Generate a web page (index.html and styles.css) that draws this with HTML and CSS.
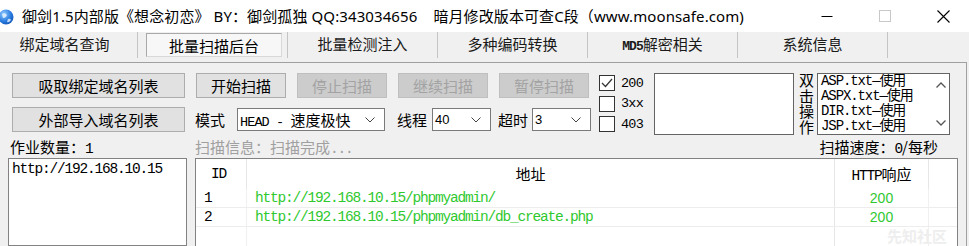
FILE: index.html
```html
<!DOCTYPE html>
<html lang="zh">
<head>
<meta charset="utf-8">
<title>御剑</title>
<link rel="stylesheet" href="styles.css">
</head>
<body>
<div class="window">
  <div class="titlebar">
    <svg class="appicon" width="16" height="16" viewBox="0 0 16 16">
      <defs>
        <radialGradient id="g" cx="0.35" cy="0.3" r="0.8">
          <stop offset="0" stop-color="#8fc7ff"/>
          <stop offset="0.6" stop-color="#2a7de1"/>
          <stop offset="1" stop-color="#0d4fae"/>
        </radialGradient>
      </defs>
      <circle cx="8" cy="8" r="7.5" fill="url(#g)"/>
      <path d="M4 5 Q7 3 9 6 Q8 9 5 9 Z" fill="#e8f4ff" opacity="0.85"/>
      <path d="M10 10 Q12 9 13 11 Q11 14 9 13 Z" fill="#e8f4ff" opacity="0.8"/>
    </svg>
    <div class="title">御剑1.5内部版《想念初恋》 BY：御剑孤独 QQ:343034656&nbsp;&nbsp;&nbsp;&nbsp;暗月修改版本可查C段（www.moonsafe.com)</div>
    <div class="controls">
      <span class="ctl"><svg width="12" height="12" viewBox="0 0 12 12"><line x1="0.5" y1="6.5" x2="11.5" y2="6.5" stroke="#000" stroke-width="1"/></svg></span>
      <span class="ctl"><svg width="12" height="12" viewBox="0 0 12 12"><rect x="0.5" y="0.5" width="11" height="11" fill="none" stroke="#c8c8c8" stroke-width="1"/></svg></span>
      <span class="ctl"><svg width="13" height="13" viewBox="0 0 13 13"><path d="M0.5 0.5 L12.5 12.5 M12.5 0.5 L0.5 12.5" stroke="#000" stroke-width="1.1"/></svg></span>
    </div>
  </div>

  <div class="tabs">
    <div class="tab first">绑定域名查询</div>
    <div class="tab active"><span class="tab-face">批量扫描后台</span></div>
    <div class="tab">批量检测注入</div>
    <div class="tab">多种编码转换</div>
    <div class="tab"><span class="mono-t">MD5</span>解密相关</div>
    <div class="tab">系统信息</div>
  </div>

  <div class="panel">
    <div class="top">
      <div class="col-left">
        <button class="btn wide">吸取绑定域名列表</button>
        <button class="btn wide">外部导入域名列表</button>
      </div>
      <div class="col-mid">
        <div class="btnrow">
          <button class="btn">开始扫描</button>
          <button class="btn disabled">停止扫描</button>
          <button class="btn disabled">继续扫描</button>
          <button class="btn disabled">暂停扫描</button>
        </div>
        <div class="optrow">
          <span class="lbl lbl-mode">模式</span>
          <div class="select sel-mode"><span class="mono">HEAD - </span>速度极快
            <svg class="chev" width="10" height="6" viewBox="0 0 10 6"><polyline points="0.5,0.5 5,5 9.5,0.5" fill="none" stroke="#444" stroke-width="1"/></svg>
          </div>
          <span class="lbl lbl-thr">线程</span>
          <div class="select sel-num">40
            <svg class="chev" width="10" height="6" viewBox="0 0 10 6"><polyline points="0.5,0.5 5,5 9.5,0.5" fill="none" stroke="#444" stroke-width="1"/></svg>
          </div>
          <span class="lbl lbl-to">超时</span>
          <div class="select sel-num">3
            <svg class="chev" width="10" height="6" viewBox="0 0 10 6"><polyline points="0.5,0.5 5,5 9.5,0.5" fill="none" stroke="#444" stroke-width="1"/></svg>
          </div>
        </div>
      </div>
      <div class="checks">
        <label class="chk"><span class="box"><svg width="14" height="14" viewBox="0 0 14 14"><polyline points="2,7 5.5,10.5 12,3" fill="none" stroke="#333" stroke-width="1.2"/></svg></span><span class="mono">200</span></label>
        <label class="chk"><span class="box"></span><span class="mono">3xx</span></label>
        <label class="chk"><span class="box"></span><span class="mono">403</span></label>
      </div>
      <div class="memo"></div>
      <div class="vtext">双击操作</div>
      <div class="listbox">
        <div class="items">
          <div class="item">ASP.txt—使用</div>
          <div class="item">ASPX.txt—使用</div>
          <div class="item">DIR.txt—使用</div>
          <div class="item">JSP.txt—使用</div>
        </div>
        <div class="scroll">
          <svg width="10" height="6" viewBox="0 0 10 6"><polyline points="0.5,5.5 5,1 9.5,5.5" fill="none" stroke="#555" stroke-width="1.3"/></svg>
          <svg width="10" height="6" viewBox="0 0 10 6"><polyline points="0.5,0.5 5,5 9.5,0.5" fill="none" stroke="#555" stroke-width="1.3"/></svg>
        </div>
      </div>
    </div>

    <div class="labels">
      <span class="l-count">作业数量：<span class="mono">1</span></span>
      <span class="l-info">扫描信息：扫描完成<span class="mono">...</span></span>
      <span class="l-speed">扫描速度：<span class="mono">0</span>/每秒</span>
    </div>

    <div class="bottom">
      <div class="urllist mono">http://192.168.10.15</div>
      <div class="results">
        <div class="row head">
          <div class="c c-id mono">ID</div>
          <div class="c c-url">地址</div>
          <div class="c c-code"><span class="mono">HTTP</span>响应</div>
          <div class="c c-rest"></div>
        </div>
        <div class="row">
          <div class="c c-id mono">1</div>
          <div class="c c-url mono green">http://192.168.10.15/phpmyadmin/</div>
          <div class="c c-code green sans">200</div>
          <div class="c c-rest"></div>
        </div>
        <div class="row">
          <div class="c c-id mono">2</div>
          <div class="c c-url mono green">http://192.168.10.15/phpmyadmin/db_create.php</div>
          <div class="c c-code green sans">200</div>
          <div class="c c-rest"></div>
        </div>
        <div class="row empty">
          <div class="c c-id"></div>
          <div class="c c-url"></div>
          <div class="c c-code"></div>
          <div class="c c-rest"></div>
        </div>
        <div class="watermark">先知社区</div>
      </div>
    </div>
  </div>
</div>
</body>
</html>
```

FILE: styles.css
```css
* { box-sizing: border-box; }

html, body {
  margin: 0;
  padding: 0;
}

body {
  width: 969px;
  height: 246px;
  overflow: hidden;
  background: #f0f0f0;
  font-family: "Noto Sans CJK SC", "Noto Sans", sans-serif;
  font-size: 15px;
  color: #000;
}

.window {
  width: 969px;
  height: 246px;
  overflow: hidden;
  display: flex;
  flex-direction: column;
}

/* ---------- title bar ---------- */
.titlebar {
  height: 32px;
  flex: none;
  background: #fff;
  display: flex;
  align-items: center;
}

.appicon {
  margin-left: -2px;
  margin-top: 2px;
  flex: none;
}

.title {
  margin-left: 8px;
  font-family: "Noto Sans", "Noto Sans CJK SC", sans-serif;
  font-size: 15px;
  letter-spacing: 0.1px;
  white-space: nowrap;
  line-height: 20px;
}

.controls {
  margin-left: auto;
  margin-right: -3px;
  display: flex;
  height: 32px;
}

.ctl {
  width: 58px;
  height: 32px;
  display: flex;
  align-items: center;
  justify-content: center;
}

/* ---------- tabs ---------- */
.tabs {
  height: 30px;
  flex: none;
  display: flex;
  align-items: flex-start;
  color: #1a1a1a;
}

.tab {
  width: 150px;
  height: 26px;
  line-height: 24px;
  text-align: center;
  border-right: 1px solid #c4c4c4;
  white-space: nowrap;
  flex: none;
}

.tab.first {
  width: 138px;
  padding-right: 8px;
}

.tab.active {
  text-align: left;
}

.tab-face {
  display: block;
  margin: 1px 0 0 8px;
  width: 136px;
  height: 24px;
  line-height: 24px;
  text-align: center;
  background: #f7f7f7;
  border: 1px solid #a8a8a8;
  border-right-color: #d8d8d8;
  border-bottom-color: #d8d8d8;
  color: #000;
}

.mono-t {
  font-family: "Liberation Mono", monospace;
  font-weight: bold;
  font-size: 13px;
  letter-spacing: -1px;
}

/* ---------- panel ---------- */
.panel {
  flex: 1;
  min-height: 0;
  width: 967px;
  border-top: 1px solid #a0a0a0;
  border-right: 1px solid #a0a0a0;
  padding-top: 10px;
  display: flex;
  flex-direction: column;
}

.mono {
  font-family: "Liberation Mono", "Noto Sans CJK SC", monospace;
  font-size: 14.5px;
  letter-spacing: -1.2px;
}

.sans {
  font-family: "Liberation Sans", sans-serif;
}

.top {
  display: flex;
  height: 62px;
  flex: none;
}

.col-left {
  margin-left: 12px;
  width: 173px;
  display: flex;
  flex-direction: column;
  gap: 9px;
}

.btn {
  height: 25px;
  width: 90px;
  padding: 0;
  border: 1px solid #adadad;
  background: #e1e1e1;
  font-family: "Noto Sans CJK SC", sans-serif;
  font-size: 15px;
  line-height: 22px;
  color: #000;
}

.btn.wide {
  width: 173px;
}

.btn.disabled {
  background: #cccccc;
  border-color: #bfbfbf;
  color: #a3a3a3;
}

.col-mid {
  margin-left: 11px;
  display: flex;
  flex-direction: column;
  gap: 9px;
}

.btnrow {
  display: flex;
  gap: 11px;
}

.optrow {
  display: flex;
  align-items: center;
  height: 25px;
  margin-left: -1px;
}

.lbl {
  line-height: 20px;
  white-space: nowrap;
}

.lbl-mode { margin-right: 12px; }
.lbl-thr { margin-left: 12px; margin-right: 5px; }
.lbl-to { margin-left: 7px; margin-right: 4px; }

.select {
  position: relative;
  height: 23px;
  background: #fff;
  border: 1px solid #7a7a7a;
  padding-left: 2px;
  line-height: 21px;
  white-space: nowrap;
  font-size: 15px;
}

.select .mono { font-size: 13.5px; letter-spacing: -0.9px; }

.sel-mode { width: 148px; }

.sel-num {
  width: 59px;
  font-family: "Liberation Sans", sans-serif;
  font-size: 13px;
}

.chev {
  position: absolute;
  right: 9px;
  top: 8px;
}

/* checkboxes */
.checks {
  margin-left: 8px;
  width: 55px;
  flex: none;
  display: flex;
  flex-direction: column;
}

.chk {
  display: flex;
  align-items: center;
  height: 20.5px;
}

.chk .mono { font-size: 13.5px; letter-spacing: -0.8px; }

.box {
  width: 16px;
  height: 16px;
  border: 1px solid #333;
  background: #fff;
  display: flex;
  align-items: center;
  justify-content: center;
  margin-right: 6px;
  flex: none;
}

.memo {
  width: 140px;
  height: 62px;
  flex: none;
  background: #fff;
  border: 1px solid #646464;
}

.vtext {
  width: 16px;
  height: 63px;
  flex: none;
  margin-left: 4px;
  margin-right: 3px;
  font-size: 15px;
  line-height: 15px;
  writing-mode: vertical-rl;
  text-orientation: upright;
  letter-spacing: 0.5px;
  white-space: nowrap;
  overflow: visible;
}

.listbox {
  width: 133px;
  height: 62px;
  flex: none;
  background: #fff;
  border: 1px solid #646464;
  display: flex;
  overflow: hidden;
}

.items {
  flex: 1;
  padding: 0 0 0 3px;
  font-family: "Liberation Mono", "Noto Sans CJK SC", monospace;
  font-size: 14px;
  letter-spacing: -1.1px;
  line-height: 15px;
  white-space: nowrap;
  overflow: hidden;
}

.scroll {
  width: 17px;
  flex: none;
  display: flex;
  flex-direction: column;
  justify-content: space-between;
  align-items: center;
  padding: 8px 0 8px;
}

/* labels */
.labels {
  display: flex;
  height: 23px;
  align-items: center;
  flex: none;
  white-space: nowrap;
}

.l-count { margin-left: 10px; width: 185px; }
.l-info { color: #a0a0a0; }
.l-speed { margin-left: auto; margin-right: 28px; }

/* bottom */
.bottom {
  display: flex;
  flex: 1;
  min-height: 0;
  overflow: hidden;
}

.urllist {
  margin-left: 8px;
  width: 179px;
  background: #fff;
  border: 1px solid #828282;
  padding: 0 0 0 3px;
  line-height: 20px;
}

.results {
  position: relative;
  margin-left: 8px;
  width: 763px;
  background: #fff;
  border: 1px solid #828282;
  border-bottom: none;
}

.row {
  display: flex;
  height: 19px;
  line-height: 19px;
  border-bottom: 1px solid #ededed;
  white-space: nowrap;
}

.row.head {
  height: 30px;
  line-height: 30px;
  border-bottom: none;
}

.row.empty { border-bottom: none; height: 20px; }

.c { flex: none; }

.c-id { width: 50px; padding-left: 8px; }
.c-url { width: 588px; padding-left: 8px; border-left: 1px solid #f0f0f0; }
.c-code { width: 94px; text-align: center; border-left: 1px solid #e6e6e6; }
.c-rest { flex: 1; border-left: 1px solid #f0f0f0; }

.row.head .c-id { text-align: center; padding-left: 0; padding-right: 5px; }
.row.head .c-url { text-align: center; padding-left: 0; padding-right: 20px; border-left-color: #e6e6e6; }
.row.head .c-rest { border-left-color: #e6e6e6; }

.green { color: #2fc82f; }
.c-code.green { font-size: 14px; }

.watermark {
  position: absolute;
  right: 10px;
  top: 68px;
  color: #eeeeee;
  font-size: 15px;
  line-height: 18px;
  font-weight: bold;
}
```
